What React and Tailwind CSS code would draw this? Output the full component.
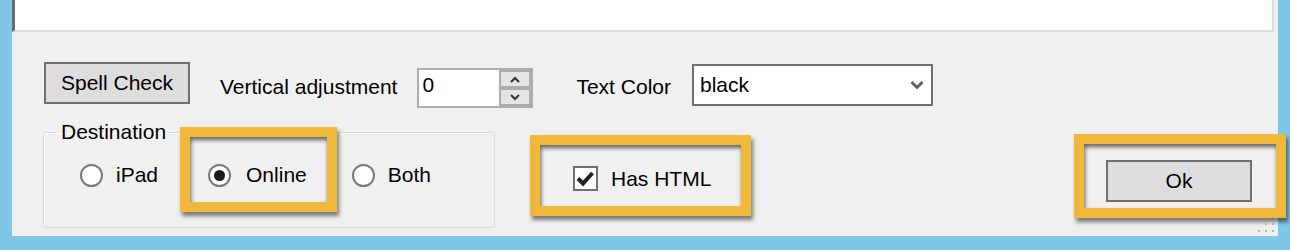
import React from "react";

function Frame({ className }) {
  return (
    <span
      className={`pointer-events-none absolute border-[10px] border-[#f0b93c] shadow-[2px_4px_4px_rgba(0,0,0,0.5),inset_1px_3px_4px_rgba(0,0,0,0.6)] ${className}`}
    />
  );
}

function Radio({ checked }) {
  return (
    <span className="w-[23px] h-[23px] rounded-full border-2 border-[#7a7a7a] bg-white flex items-center justify-center shrink-0">
      {checked && <span className="w-[11px] h-[11px] rounded-full bg-[#1c1c1c]" />}
    </span>
  );
}

export default function App() {
  return (
    <div className="w-[1290px] h-[250px] bg-[#7ec7e6] overflow-hidden font-['Liberation_Sans',Arial,sans-serif] text-[21px] leading-[24px] text-black">
      <div className="relative mx-[12px] h-[236px] bg-[#f0f0f0] flex flex-col">
        {/* text area above */}
        <div className="h-[32px] mr-[4px] bg-white border-l-[3px] border-l-[#6b6b6b] border-r-2 border-r-[#dedede] border-b-2 border-b-[#dedede]" />

        {/* row 1 */}
        <div className="flex items-start mt-[30px] pl-[32px]">
          <button className="w-[146px] h-[42px] border-2 border-[#707070] bg-[#dddddd] text-[21px] leading-[24px]">
            Spell Check
          </button>
          <span className="ml-[30px] mt-[13px] whitespace-nowrap">Vertical adjustment</span>
          <div className="ml-[20px] mt-[6px] w-[116px] h-[40px] border-2 border-[#adadad] bg-white flex">
            <span className="flex-1 pl-[3px] pt-[3px]">0</span>
            <div className="w-[32px] bg-[#adadad] p-[2px] flex flex-col gap-[4px]">
              <span className="h-[14px] bg-[#e5e5e5] flex items-center justify-center">
                <svg width="10" height="7" viewBox="0 0 10 7">
                  <path d="M1 6 L5 2 L9 6" fill="none" stroke="#333" strokeWidth="2" />
                </svg>
              </span>
              <span className="h-[14px] bg-[#e5e5e5] flex items-center justify-center">
                <svg width="10" height="7" viewBox="0 0 10 7">
                  <path d="M1 1 L5 5 L9 1" fill="none" stroke="#333" strokeWidth="2" />
                </svg>
              </span>
            </div>
          </div>
          <span className="ml-[43px] mt-[13px] whitespace-nowrap">Text Color</span>
          <div className="ml-[21px] mt-[2px] w-[241px] h-[42px] border-2 border-[#707070] bg-white flex items-center justify-between pl-[6px] pr-[7px]">
            <span>black</span>
            <svg width="14" height="10" viewBox="0 0 14 10">
              <path d="M1.5 2 L7 7.5 L12.5 2" fill="none" stroke="#606060" strokeWidth="3" />
            </svg>
          </div>
        </div>

        {/* row 2 */}
        <div className="flex items-start pl-[31px]">
          <fieldset className="mt-[12px] w-[452px] border border-[#d5dce2] rounded-[3px] shadow-[inset_1px_1px_0_#ffffff]">
            <legend className="ml-[14px] px-[3px] leading-[24px]">Destination</legend>
            <div className="flex items-center pl-[36px] pt-[19px] pb-[40px]">
              <div className="flex items-center gap-[13px] mr-[50px]">
                <Radio />
                <span>iPad</span>
              </div>
              <div className="relative flex items-center gap-[15px] mr-[45px]">
                <Radio checked />
                <span>Online</span>
                <Frame className="left-[-28px] top-[-36px] right-[-30px] bottom-[-25px]" />
              </div>
              <div className="flex items-center gap-[13px]">
                <Radio />
                <span>Both</span>
              </div>
            </div>
          </fieldset>

          <div className="relative ml-[78px] mt-[58px] flex items-center gap-[13px]">
            <span className="w-[25px] h-[25px] border-2 border-[#707070] bg-white flex items-center justify-center">
              <svg width="19" height="17" viewBox="0 0 19 17">
                <path d="M2 8.5 L7 13.5 L16.5 3" fill="none" stroke="#222" strokeWidth="4" />
              </svg>
            </span>
            <span className="whitespace-nowrap">Has HTML</span>
            <Frame className="left-[-43px] top-[-31px] right-[-40px] bottom-[-25px]" />
          </div>

          <div className="relative ml-auto mr-[26px] mt-[52px]">
            <button className="w-[146px] h-[42px] border-2 border-[#707070] bg-[#dddddd] text-[21px] leading-[24px]">
              Ok
            </button>
            <Frame className="left-[-32px] top-[-26px] right-[-34px] bottom-[-16px]" />
          </div>
        </div>

        {/* size grip */}
        <svg className="absolute right-[4px] bottom-[4px]" width="16" height="16" viewBox="0 0 16 16">
          <rect x="14" y="0" width="2" height="2" fill="#b4b4b4" />
          <rect x="7" y="7" width="2" height="2" fill="#b4b4b4" />
          <rect x="14" y="7" width="2" height="2" fill="#b4b4b4" />
          <rect x="0" y="14" width="2" height="2" fill="#b4b4b4" />
          <rect x="7" y="14" width="2" height="2" fill="#b4b4b4" />
          <rect x="14" y="14" width="2" height="2" fill="#b4b4b4" />
        </svg>
      </div>
    </div>
  );
}
